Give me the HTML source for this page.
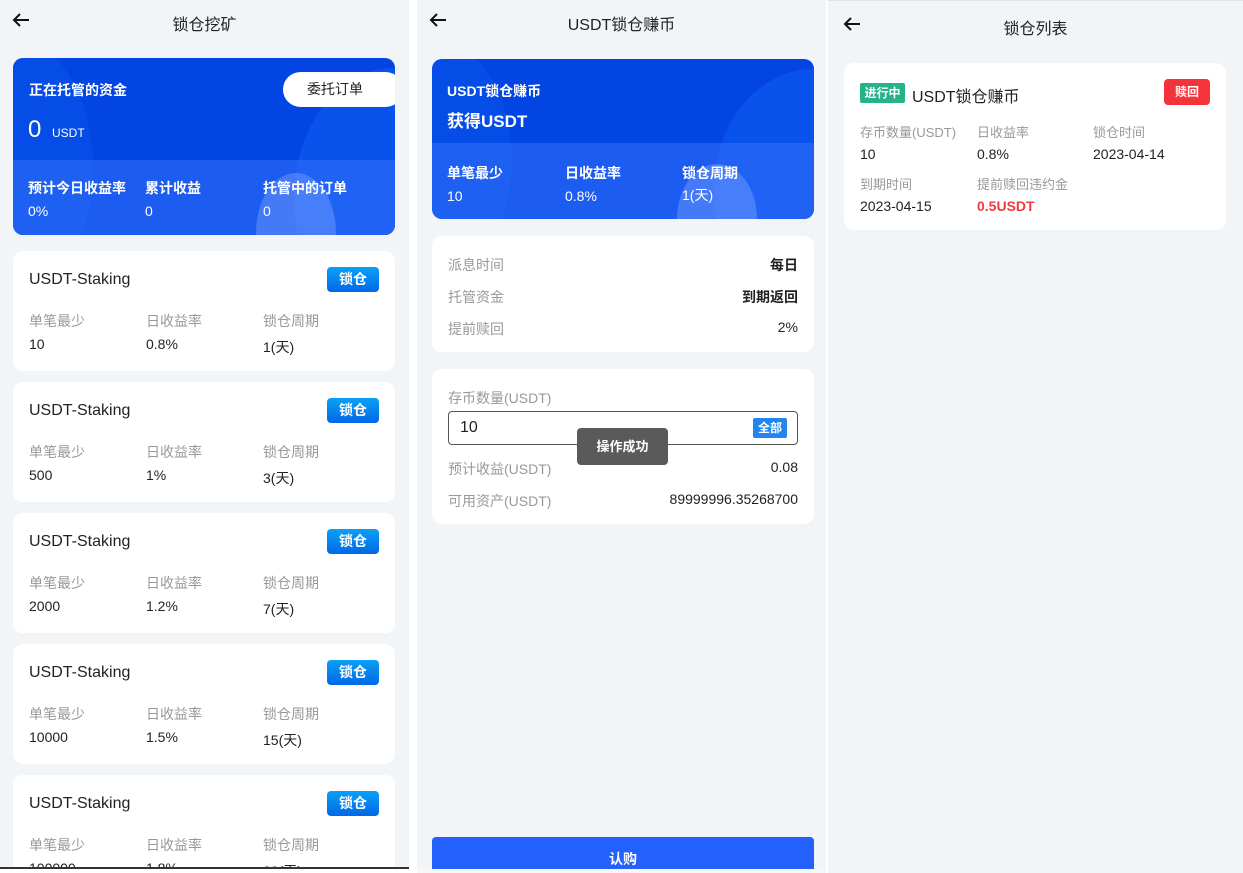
<!DOCTYPE html>
<html><head><meta charset="utf-8"><style>
*{margin:0;padding:0;box-sizing:border-box}
body{width:1243px;height:873px;position:relative;overflow:hidden;background:#fff;font-family:"Liberation Sans","Noto Sans CJK SC",sans-serif;color:#222}
.a{position:absolute}
.panel{position:absolute;top:0;height:873px;background:#f2f5f7;overflow:hidden}
.hd{position:absolute;top:11px;left:0;right:0;text-align:center;font-size:16px;color:#222}
.arrow{position:absolute;left:11px;top:12px}
.card{position:absolute;background:#fff;border-radius:10px}
.blue{position:absolute;border-radius:10px;overflow:hidden;background:#0345e3;color:#fff}
.g{color:#999;font-size:14px}
.v{font-size:14px;color:#222}
.btn{position:absolute;width:52px;height:25px;border-radius:4px;background:linear-gradient(#0aa0f5,#0068e8);color:#fff;font-size:14px;font-weight:bold;text-align:center;line-height:25px}
.b{font-weight:bold}
</style></head><body>

<!-- Panel 1 -->
<div class="panel" style="left:0;width:409px">
<svg class="arrow" width="20" height="16" viewBox="0 0 20 16"><path d="M18 8H3M9 2L3 8l6 6" stroke="#111" stroke-width="2" fill="none"/></svg>
<div class="hd" style="left:0">锁仓挖矿</div>
<div class="blue" style="left:13px;top:58px;width:382px;height:177px">
 <div class="a" style="left:-80px;top:-20px;width:160px;height:260px;border-radius:50%;background:#0a55ee;opacity:.5"></div>
 <div class="a" style="left:281px;top:10px;width:200px;height:260px;border-radius:50%;background:#0a52ec"></div>
 <div class="a" style="left:0;top:102px;width:382px;height:75px;background:rgba(60,120,255,.45)"></div>
 <div class="a" style="left:243px;top:115px;width:80px;height:120px;border-radius:50%;background:rgba(120,160,255,.45)"></div>
 <div class="a b" style="left:16px;top:22px;font-size:14px">正在托管的资金</div>
 <div class="a" style="left:15px;top:58px;font-size:24px">0</div>
 <div class="a" style="left:39px;top:68px;font-size:12px">USDT</div>
 <div class="a" style="left:270px;top:14px;width:120px;height:35px;border-radius:18px;background:#fff;color:#222;font-size:14px;line-height:35px;padding-left:24px">委托订单</div>
 <div class="a b" style="left:15px;top:120px;font-size:14px">预计今日收益率</div>
 <div class="a" style="left:15px;top:145px;font-size:14px">0%</div>
 <div class="a b" style="left:132px;top:120px;font-size:14px">累计收益</div>
 <div class="a" style="left:132px;top:145px;font-size:14px">0</div>
 <div class="a b" style="left:250px;top:120px;font-size:14px">托管中的订单</div>
 <div class="a" style="left:250px;top:145px;font-size:14px">0</div>
</div>
<div class="card" style="left:13px;top:251px;width:382px;height:120px"><div class="a" style="left:16px;top:20px;font-size:16px">USDT-Staking</div><div class="btn" style="left:314px;top:16px">锁仓</div><div class="a g" style="left:16px;top:60px">单笔最少</div><div class="a g" style="left:133px;top:60px">日收益率</div><div class="a g" style="left:250px;top:60px">锁仓周期</div><div class="a v" style="left:16px;top:85px">10</div><div class="a v" style="left:133px;top:85px">0.8%</div><div class="a v" style="left:250px;top:86px">1(天)</div></div>
<div class="card" style="left:13px;top:382px;width:382px;height:120px"><div class="a" style="left:16px;top:20px;font-size:16px">USDT-Staking</div><div class="btn" style="left:314px;top:16px">锁仓</div><div class="a g" style="left:16px;top:60px">单笔最少</div><div class="a g" style="left:133px;top:60px">日收益率</div><div class="a g" style="left:250px;top:60px">锁仓周期</div><div class="a v" style="left:16px;top:85px">500</div><div class="a v" style="left:133px;top:85px">1%</div><div class="a v" style="left:250px;top:86px">3(天)</div></div>
<div class="card" style="left:13px;top:513px;width:382px;height:120px"><div class="a" style="left:16px;top:20px;font-size:16px">USDT-Staking</div><div class="btn" style="left:314px;top:16px">锁仓</div><div class="a g" style="left:16px;top:60px">单笔最少</div><div class="a g" style="left:133px;top:60px">日收益率</div><div class="a g" style="left:250px;top:60px">锁仓周期</div><div class="a v" style="left:16px;top:85px">2000</div><div class="a v" style="left:133px;top:85px">1.2%</div><div class="a v" style="left:250px;top:86px">7(天)</div></div>
<div class="card" style="left:13px;top:644px;width:382px;height:120px"><div class="a" style="left:16px;top:20px;font-size:16px">USDT-Staking</div><div class="btn" style="left:314px;top:16px">锁仓</div><div class="a g" style="left:16px;top:60px">单笔最少</div><div class="a g" style="left:133px;top:60px">日收益率</div><div class="a g" style="left:250px;top:60px">锁仓周期</div><div class="a v" style="left:16px;top:85px">10000</div><div class="a v" style="left:133px;top:85px">1.5%</div><div class="a v" style="left:250px;top:86px">15(天)</div></div>
<div class="card" style="left:13px;top:775px;width:382px;height:120px"><div class="a" style="left:16px;top:20px;font-size:16px">USDT-Staking</div><div class="btn" style="left:314px;top:16px">锁仓</div><div class="a g" style="left:16px;top:60px">单笔最少</div><div class="a g" style="left:133px;top:60px">日收益率</div><div class="a g" style="left:250px;top:60px">锁仓周期</div><div class="a v" style="left:16px;top:85px">100000</div><div class="a v" style="left:133px;top:85px">1.8%</div><div class="a v" style="left:250px;top:86px">30(天)</div></div>
<div class="a" style="left:0;top:867px;width:412px;height:2px;background:#333"></div>
<div class="a" style="left:0;top:869px;width:412px;height:4px;background:#fff"></div>
</div>

<!-- Panel 2 -->
<div class="panel" style="left:417px;width:409px">
<svg class="arrow" width="20" height="16" viewBox="0 0 20 16"><path d="M18 8H3M9 2L3 8l6 6" stroke="#111" stroke-width="2" fill="none"/></svg>
<div class="hd">USDT锁仓赚币</div>
<div class="blue" style="left:15px;top:59px;width:382px;height:160px">
 <div class="a" style="left:-80px;top:-20px;width:160px;height:240px;border-radius:50%;background:#0a55ee;opacity:.5"></div>
 <div class="a" style="left:282px;top:10px;width:200px;height:240px;border-radius:50%;background:#0a52ec"></div>
 <div class="a" style="left:0;top:84px;width:382px;height:76px;background:rgba(60,120,255,.45)"></div>
 <div class="a" style="left:245px;top:105px;width:80px;height:110px;border-radius:50%;background:rgba(120,160,255,.45)"></div>
 <div class="a b" style="left:15px;top:22px;font-size:14px">USDT锁仓赚币</div>
 <div class="a b" style="left:15px;top:48px;font-size:17px">获得USDT</div>
 <div class="a b" style="left:15px;top:104px;font-size:14px">单笔最少</div>
 <div class="a" style="left:15px;top:129px;font-size:14px">10</div>
 <div class="a b" style="left:133px;top:104px;font-size:14px">日收益率</div>
 <div class="a" style="left:133px;top:129px;font-size:14px">0.8%</div>
 <div class="a b" style="left:250px;top:104px;font-size:14px">锁仓周期</div>
 <div class="a" style="left:250px;top:126px;font-size:14px">1(天)</div>
</div>
<div class="card" style="left:15px;top:236px;width:382px;height:116px">
 <div class="a g" style="left:16px;top:19px">派息时间</div><div class="a v b" style="right:16px;top:19px">每日</div>
 <div class="a g" style="left:16px;top:51px">托管资金</div><div class="a v b" style="right:16px;top:51px">到期返回</div>
 <div class="a g" style="left:16px;top:83px">提前赎回</div><div class="a v" style="right:16px;top:83px">2%</div>
</div>
<div class="card" style="left:15px;top:369px;width:382px;height:155px">
 <div class="a g" style="left:16px;top:19px">存币数量(USDT)</div>
 <div class="a" style="left:16px;top:42px;width:350px;height:34px;border:1px solid #555;border-radius:4px"></div>
 <div class="a" style="left:28px;top:50px;font-size:16px">10</div>
 <div class="a b" style="left:321px;top:49px;width:34px;height:20px;background:#2286ee;color:#fff;font-size:12px;text-align:center;line-height:20px;border-radius:2px">全部</div>
 <div class="a g" style="left:16px;top:90px">预计收益(USDT)</div><div class="a v" style="right:16px;top:90px">0.08</div>
 <div class="a g" style="left:16px;top:122px">可用资产(USDT)</div><div class="a v" style="right:16px;top:122px">89999996.35268700</div>
 <div class="a b" style="left:145px;top:59px;width:91px;height:37px;background:#5a5a5a;border-radius:4px;color:#fff;font-size:13px;text-align:center;line-height:37px">操作成功</div>
</div>
<div class="a b" style="left:15px;top:837px;width:382px;height:40px;background:#2460fb;border-radius:4px;color:#fff;font-size:14px;text-align:center;line-height:44px">认购</div>
<div class="a" style="left:0;top:869px;width:409px;height:4px;background:#f7f7f7"></div>
</div>

<!-- Panel 3 -->
<div class="panel" style="left:828px;width:415px;border-top:1px solid #e2e4e6">
<svg class="arrow" style="left:14px;top:15px" width="20" height="16" viewBox="0 0 20 16"><path d="M18 8H3M9 2L3 8l6 6" stroke="#111" stroke-width="2" fill="none"/></svg>
<div class="hd" style="top:14px">锁仓列表</div>
<div class="card" style="left:16px;top:62px;width:382px;height:167px">
 <div class="a b" style="left:16px;top:20px;width:45px;height:20px;background:#26b38a;color:#fff;font-size:12px;text-align:center;line-height:20px;border-radius:2px">进行中</div>
 <div class="a" style="left:68px;top:20px;font-size:16px">USDT锁仓赚币</div>
 <div class="a b" style="left:320px;top:16px;width:46px;height:26px;background:#f5333a;color:#fff;font-size:12px;text-align:center;line-height:26px;border-radius:4px">赎回</div>
 <div class="a g" style="left:16px;top:59px;font-size:13px">存币数量(USDT)</div>
 <div class="a g" style="left:133px;top:59px;font-size:13px">日收益率</div>
 <div class="a g" style="left:249px;top:59px;font-size:13px">锁仓时间</div>
 <div class="a v" style="left:16px;top:83px">10</div>
 <div class="a v" style="left:133px;top:83px">0.8%</div>
 <div class="a v" style="left:249px;top:83px">2023-04-14</div>
 <div class="a g" style="left:16px;top:111px;font-size:13px">到期时间</div>
 <div class="a g" style="left:133px;top:111px;font-size:13px">提前赎回违约金</div>
 <div class="a v" style="left:16px;top:135px">2023-04-15</div>
 <div class="a v b" style="left:133px;top:135px;color:#ef3b40">0.5USDT</div>
</div>
</div>
</body></html>
